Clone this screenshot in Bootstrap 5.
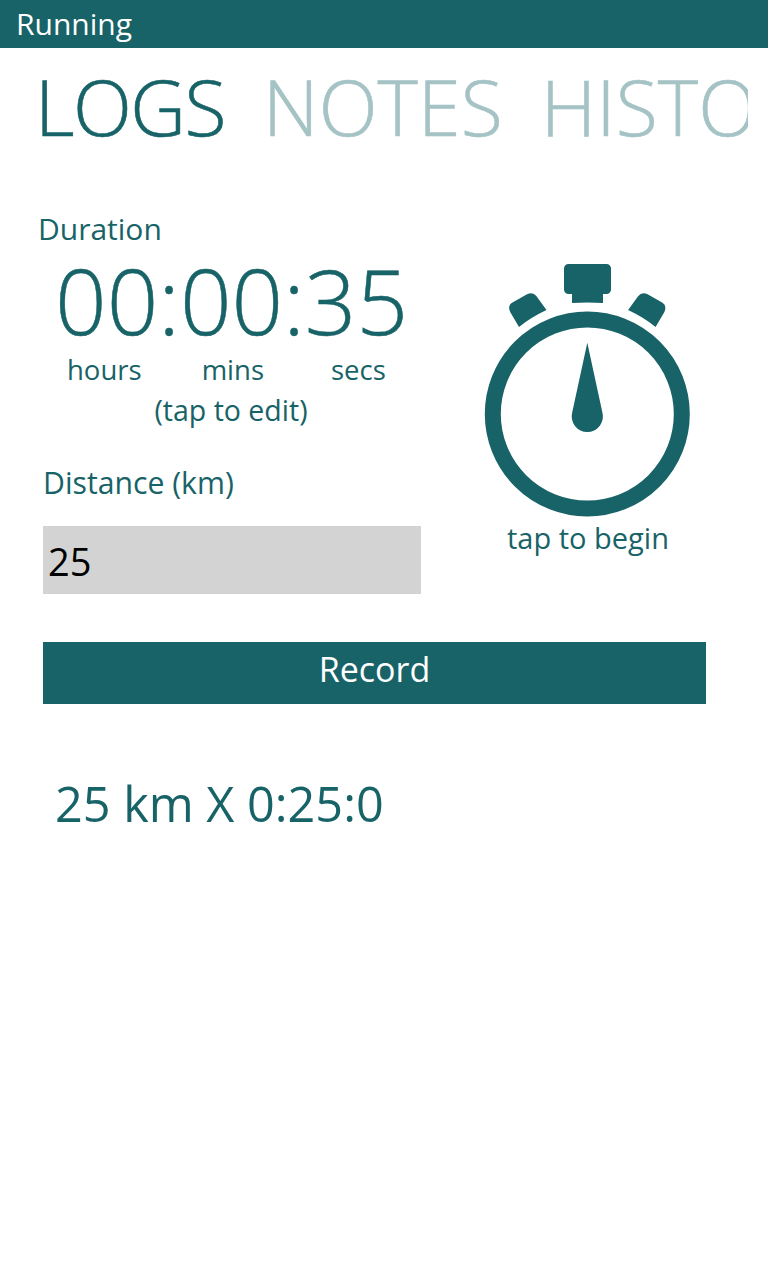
<!doctype html>
<html lang="en"><head><meta charset="utf-8">
<title>Running</title>
<link href="https://cdn.jsdelivr.net/npm/bootstrap@5.3.0/dist/css/bootstrap.min.css" rel="stylesheet">
<style>
:root{--teal:#176367}
body{font-family:"Open Sans","Noto Sans",sans-serif;color:var(--teal);background:#fff;width:768px;height:1280px;overflow:hidden}
.app-bar{height:48px;background:var(--teal);color:#fff;font-size:30px;line-height:47px;padding-left:16px}
.tab-strip{margin:19px 20px 0 35px;height:82px;overflow:hidden;white-space:nowrap;font-size:77px;line-height:80px;font-weight:300;gap:38px;-webkit-text-stroke:.6px currentColor}
.tab-on{letter-spacing:-1.5px}
.tab-off{color:#a5c3c5;letter-spacing:.1px}
.main-row{margin-top:60px;height:433px}
.left-col{width:460px}
.lbl{font-size:30px;line-height:40px}
.lbl-duration{margin-left:38px}
.lbl-distance{margin:33px 0 0 43px;font-size:30.200px}
.clock{font-size:90.500px;line-height:100px;font-weight:300;margin:1px 0 0 55px;-webkit-text-stroke:.5px currentColor}
.units{margin:2px 0 0 67px;font-size:27.500px;line-height:36px}
.unit-a{margin-right:60px}
.unit-b{margin-right:67px}
.hint{font-size:28.500px;line-height:40px;margin-top:2px;width:462px;text-align:center}
.dist-box{width:378px;height:68px;background:#d3d3d3;color:#000;font-size:38px;line-height:70px;padding-left:5px;margin:23px 0 0 43px}
.dial-col{margin-left:-54px}
.dial{margin-top:53px}
.dial-cap{font-size:29px;line-height:40px;margin-top:0;padding-left:2px}
.record{display:block;width:663px;height:62px;margin:0 0 0 43px;background:var(--teal);color:#fff;font-size:34px;line-height:46px;border:0;border-radius:0;padding:0 0 8px}
.result{font-size:48.600px;line-height:60px;margin:69px 0 0 55px}
</style></head>
<body>
<div class="app-bar">Running</div>
<div class="tab-strip d-flex"><span class="tab-on">LOGS</span><span class="tab-off">NOTES</span><span class="tab-off">HISTORY</span></div>
<div class="main-row d-flex">
  <div class="left-col">
    <div class="lbl lbl-duration">Duration</div>
    <div class="clock">00:00:35</div>
    <div class="units d-flex"><span class="unit-a">hours</span><span class="unit-b">mins</span><span>secs</span></div>
    <div class="hint">(tap to edit)</div>
    <div class="lbl lbl-distance">Distance (km)</div>
    <div class="dist-box">25</div>
  </div>
  <div class="flex-fill d-flex flex-column align-items-center dial-col">
    <svg width="210" height="256" viewBox="482 262 210 256" class="d-block dial" aria-hidden="true">
      <circle cx="587.3" cy="414" r="94.5" fill="none" stroke="#176367" stroke-width="16"/>
      <path fill="#176367" d="M587.3 342.700L572.200 412.500a15.600 15.600 0 1 0 30.200 0z"/>
      <path fill="#176367" d="M568.500 264h38a4.500 4.500 0 0 1 4.500 4.500v21a4.500 4.500 0 0 1-4.500 4.500h-3.500v9q-15.500-1.200-31 0v-9h-3.500a4.500 4.500 0 0 1-4.500-4.500v-21a4.500 4.500 0 0 1 4.500-4.500z"/>
      <path fill="#176367" d="M512.500 302.500L527 294.200q6-2.800 9.500 2L546.500 310q-16 7.500-27.500 17L510.200 312q-3-6.300 2.300-9.500z"/>
      <path fill="#176367" d="M662.100 302.500L647.600 294.200q-6-2.800-9.500 2L628.100 310q16 7.500 27.500 17L664.400 312q3-6.300-2.300-9.500z"/>
    </svg>
    <div class="dial-cap">tap to begin</div>
  </div>
</div>
<button class="btn record" type="button">Record</button>
<div class="result">25 km X 0:25:0</div>
</body></html>
